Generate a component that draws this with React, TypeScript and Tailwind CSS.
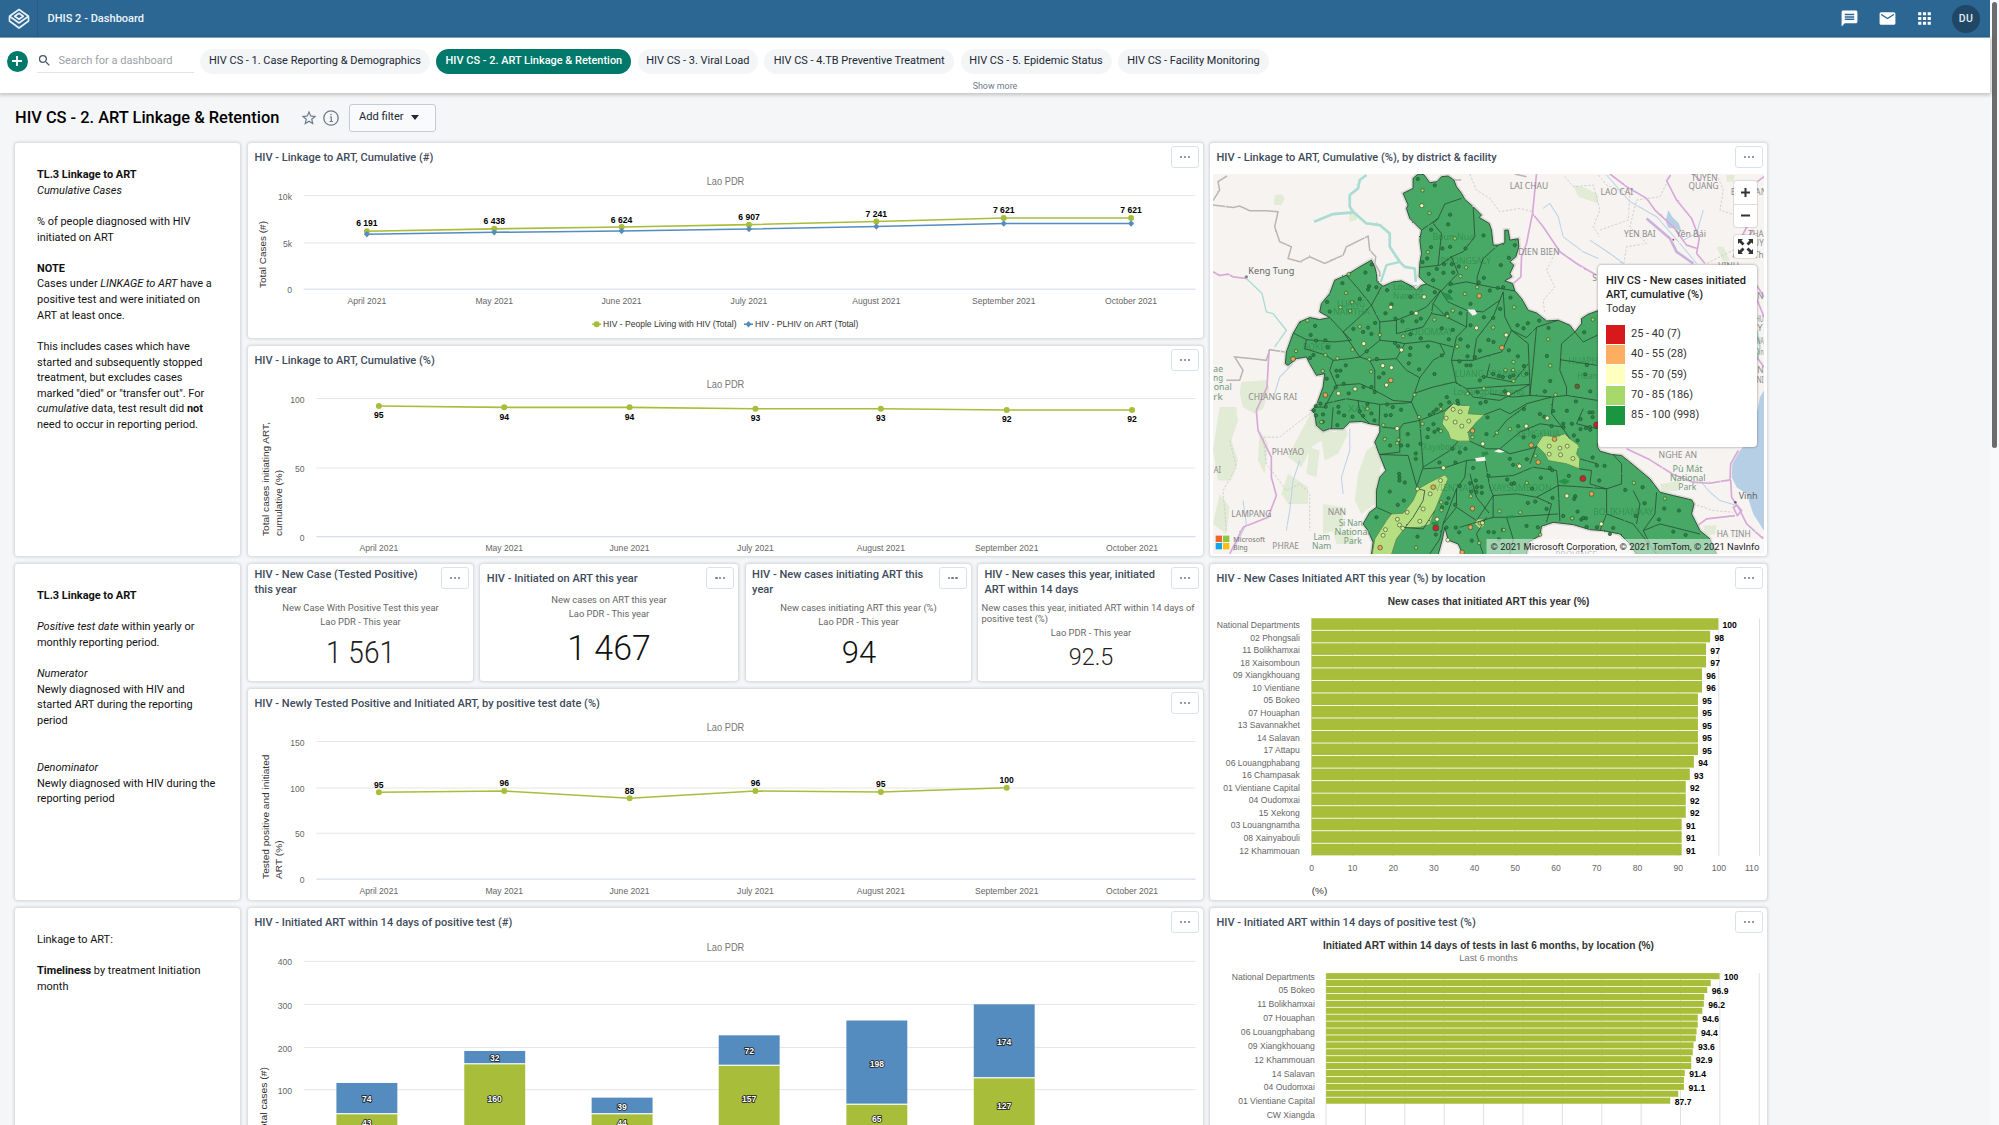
import React from "react";
import { MdMessage, MdMail, MdApps, MdSearch, MdStarBorder } from "react-icons/md";

const GREEN = "#a8be3a";
const BLUE = "#558cc0";
const ARIAL = '"Liberation Sans", Arial, sans-serif';
const ROBOTO = "Roboto, sans-serif";

type TProps = {
  x: number;
  y: number;
  s?: number;
  len?: number;
  anchor?: "start" | "middle" | "end";
  fill?: string;
  weight?: number;
  font?: string;
  rotate?: boolean;
  outline?: boolean;
  children: React.ReactNode;
};

/* Chart label whose y is the vertical middle of its digits. */
function T({ x, y, s = 8.6, len, anchor = "middle", fill = "#666", weight = 400, font = ARIAL, rotate, outline, children }: TProps) {
  const dy = s * 0.355;
  return (
    <text
      x={rotate ? 0 : x}
      y={rotate ? dy : y + dy}
      transform={rotate ? `translate(${x} ${y}) rotate(-90)` : undefined}
      fontSize={s}
      fontFamily={font}
      fontWeight={weight}
      fill={fill}
      textAnchor={anchor}
      textLength={len}
      lengthAdjust="spacingAndGlyphs"
      stroke={outline ? "#1a1a1a" : undefined}
      strokeWidth={outline ? 1.6 : undefined}
      paintOrder={outline ? "stroke" : undefined}
    >
      {children}
    </text>
  );
}

function MenuButton() {
  return (
    <button className="flex h-[22px] w-7 shrink-0 items-center justify-center gap-[1.5px] rounded-[3px] border border-[#d9e2ea] bg-white">
      <i className="size-[2.4px] rounded-full bg-[#6e7a8a]" />
      <i className="size-[2.4px] rounded-full bg-[#6e7a8a]" />
      <i className="size-[2.4px] rounded-full bg-[#6e7a8a]" />
    </button>
  );
}

function Card({ title, twoLine, className, children }: { title?: string; twoLine?: boolean; className: string; children: React.ReactNode }) {
  return (
    <section className={`flex flex-col overflow-hidden rounded-[3px] bg-white shadow-[0_0_3px_1px_rgba(33,43,54,0.17)] ${className}`}>
      {title && (
        <header className="flex h-7 shrink-0 items-start justify-between pt-[3px] pr-[4px] pl-[6.5px]">
          <h2
            className={
              twoLine
                ? "w-[180px] text-[11.05px] leading-[15px] font-medium text-[#404b5a]"
                : "pt-[4px] text-[11.05px] leading-[15px] font-medium whitespace-nowrap text-[#404b5a]"
            }
          >
            {title}
          </h2>
          <MenuButton />
        </header>
      )}
      {children}
    </section>
  );
}

function TextCard({ className, children }: { className: string; children: React.ReactNode }) {
  return (
    <Card className={className}>
      <div className="pt-[24px] pr-3 pl-[22px] text-[10.94px] leading-[15.62px] text-[#111]">{children}</div>
    </Card>
  );
}

const MONTHS = ["April 2021", "May 2021", "June 2021", "July 2021", "August 2021", "September 2021", "October 2021"];
const XA = [367, 494.5, 622, 749.5, 877, 1004.5, 1132];
const XB = [379, 504.5, 630, 756, 881.5, 1007.5, 1133];

function Grid({ rows, x0, lx }: { rows: [string, number][]; x0: number; lx: number }) {
  return (
    <>
      {rows.map(([l, y]) => (
        <g key={l}>
          <line x1={x0} x2={1196.5} y1={y} y2={y} stroke={l === "0" ? "#ccd6eb" : "#e6e6e6"} />
          <T x={lx} y={y + 1} anchor="end">{l}</T>
        </g>
      ))}
    </>
  );
}

function Line({ xs, ys, color = GREEN, diamond }: { xs: number[]; ys: number[]; color?: string; diamond?: boolean }) {
  return (
    <g>
      <polyline points={ys.map((y, i) => `${xs[i]},${y}`).join(" ")} fill="none" stroke={color} strokeWidth="1.6" />
      {ys.map((y, i) =>
        diamond ? (
          <path key={i} d={`M${xs[i]} ${y - 3.2}l3 3.2l-3 3.2l-3-3.2z`} fill={color} />
        ) : (
          <circle key={i} cx={xs[i]} cy={y} r="3" fill={color} />
        )
      )}
    </g>
  );
}

function CumulativeCount() {
  const g = [231.3, 228.8, 227, 224.6, 221.4, 218, 218];
  const b = [234.2, 232.3, 231, 229, 226.4, 223.4, 223.4];
  const v = ["6 191", "6 438", "6 624", "6 907", "7 241", "7 621", "7 621"];
  const ly = [223.3, 221.2, 219.6, 217.3, 214.4, 210.4, 210.4];
  return (
    <svg className="h-[167px] w-full shrink-0" viewBox="248 171 956 167">
      <T x={726} y={181.7} s={10.2} len={37.7} fill="#777">Lao PDR</T>
      <Grid rows={[["10k", 195.5], ["5k", 243], ["0", 289.2]]} x0={303.7} lx={292} />
      <T x={262.5} y={288} s={10} len={67} anchor="start" fill="#333" rotate>Total Cases (#)</T>
      <Line xs={XA} ys={g} />
      <Line xs={XA} ys={b} color={BLUE} diamond />
      {v.map((t, i) => <T key={i} x={XA[i]} y={ly[i]} weight={700} fill="#000">{t}</T>)}
      {MONTHS.map((m, i) => <T key={m} x={XA[i]} y={300.7}>{m}</T>)}
      <Line xs={[597]} ys={[324.3]} />
      <line x1={592.5} x2={601.5} y1={324.3} y2={324.3} stroke={GREEN} strokeWidth="1.6" />
      <T x={603.5} y={324} anchor="start" len={133.5} fill="#333">HIV - People Living with HIV (Total)</T>
      <Line xs={[749]} ys={[324.3]} color={BLUE} diamond />
      <line x1={744.5} x2={753.5} y1={324.3} y2={324.3} stroke={BLUE} strokeWidth="1.6" />
      <T x={755.5} y={324} anchor="start" len={103.5} fill="#333">HIV - PLHIV on ART (Total)</T>
    </svg>
  );
}

function CumulativePct() {
  const y = [406, 407.3, 407.3, 408.7, 408.7, 410, 410];
  const v = [95, 94, 94, 93, 93, 92, 92];
  return (
    <svg className="h-[182px] w-full shrink-0" viewBox="248 374 956 182">
      <T x={726} y={384.7} s={10.2} len={37.7} fill="#777">Lao PDR</T>
      <Grid rows={[["100", 398.5], ["50", 468], ["0", 536.8]]} x0={316.5} lx={304.7} />
      <T x={265} y={536} s={10} len={114} anchor="start" fill="#333" rotate>Total cases initiating ART,</T>
      <T x={278} y={536} s={10} len={66} anchor="start" fill="#333" rotate>cumulative (%)</T>
      <Line xs={XB} ys={y} />
      {v.map((t, i) => <T key={i} x={XB[i]} y={y[i] + 9.4} weight={700} fill="#000">{t}</T>)}
      {MONTHS.map((m, i) => <T key={m} x={XB[i]} y={548.3}>{m}</T>)}
    </svg>
  );
}

function NewlyTested() {
  const y = [793.3, 792, 799.3, 792, 793, 788.7];
  const v = [95, 96, 88, 96, 95, 100];
  return (
    <svg className="h-[182px] w-full shrink-0" viewBox="248 718 956 182">
      <T x={726} y={728.3} s={10.2} len={37.7} fill="#777">Lao PDR</T>
      <Grid rows={[["150", 742.5], ["100", 789], ["50", 834.3], ["0", 880.2]]} x0={316.5} lx={304.7} />
      <T x={265} y={880} s={10} len={124.5} anchor="start" fill="#333" rotate>Tested positive and initiated</T>
      <T x={278} y={880} s={10} len={38.5} anchor="start" fill="#333" rotate>ART (%)</T>
      <Line xs={XB} ys={y} />
      {v.map((t, i) => <T key={i} x={XB[i]} y={y[i] - 7.6} weight={700} fill="#000">{t}</T>)}
      {MONTHS.map((m, i) => <T key={m} x={XB[i]} y={892}>{m}</T>)}
    </svg>
  );
}

function StackedColumns() {
  const c = [367, 495, 622.5, 749.7, 877.5, 1005];
  const top = [1083, 1051, 1097.7, 1035.3, 1020.5, 1004.3];
  const mid = [1114, 1064, 1114, 1065.5, 1104.5, 1078];
  const a = [[74, 1099.3], [32, 1058.2], [39, 1106.8], [72, 1051.2], [198, 1063.8], [174, 1041.8]];
  const b = [[43, 1123], [160, 1098.8], [44, 1123], [157, 1099.3], [65, 1119.2], [127, 1106]];
  return (
    <svg className="h-[207px] w-full shrink-0" viewBox="248 936 956 207">
      <T x={726} y={947} s={10.2} len={37.7} fill="#777">Lao PDR</T>
      <Grid rows={[["400", 961.3], ["300", 1004.5], ["200", 1047.5], ["100", 1089.7]]} x0={303.7} lx={292} />
      <T x={263} y={1134.5} s={10} len={67.5} anchor="start" fill="#333" rotate>Total cases (#)</T>
      {c.map((x, i) => (
        <g key={x}>
          <rect x={x - 30.5} y={top[i]} width={61} height={mid[i] - top[i] - 0.8} fill={BLUE} />
          <rect x={x - 30.5} y={mid[i] + 0.4} width={61} height={80} fill={GREEN} />
          <T x={x} y={a[i][1]} fill="#fff" weight={700} outline>{a[i][0]}</T>
          <T x={x} y={b[i][1]} fill="#fff" weight={700} outline>{b[i][0]}</T>
        </g>
      ))}
    </svg>
  );
}

const LOCATIONS: [string, number][] = [
  ["National Departments", 100], ["02 Phongsali", 98], ["11 Bolikhamxai", 97], ["18 Xaisomboun", 97], ["09 Xiangkhouang", 96],
  ["10 Vientiane", 96], ["05 Bokeo", 95], ["07 Houaphan", 95], ["13 Savannakhet", 95], ["14 Salavan", 95], ["17 Attapu", 95],
  ["06 Louangphabang", 94], ["16 Champasak", 93], ["01 Vientiane Capital", 92], ["04 Oudomxai", 92], ["15 Xekong", 92],
  ["03 Louangnamtha", 91], ["08 Xainyabouli", 91], ["12 Khammouan", 91],
];

function LocationBars() {
  const pitch = 12.55;
  return (
    <svg className="h-[307px] w-full shrink-0" viewBox="1210 593 558 307">
      <T x={1489} y={601.7} s={10.2} len={202} weight={700} fill="#333">New cases that initiated ART this year (%)</T>
      {[0, 10, 20, 30, 40, 50, 60, 70, 80, 90, 100, 110].map((n) => (
        <g key={n}>
          <line x1={1311.7 + n * 4.08} x2={1311.7 + n * 4.08} y1={619} y2={857.5} stroke="#e0e0e0" />
          <T x={n === 110 ? 1752.8 : 1311.9 + n * 4.08} y={869.3}>{n}</T>
        </g>
      ))}
      {LOCATIONS.map(([l, v], i) => (
        <g key={l}>
          <rect x={1311.7} y={619 + i * pitch} width={v * 4.075} height={pitch - 0.9} fill={GREEN} />
          <T x={1300} y={625.8 + i * pitch} anchor="end">{l}</T>
          <T x={1316 + v * 4.075} y={626.2 + i * pitch} anchor="start" weight={700} fill="#000">{v}</T>
        </g>
      ))}
      <T x={1312} y={891.7} s={9.4} anchor="start" len={15.5} fill="#333">(%)</T>
    </svg>
  );
}

function TimelinessBars() {
  const ends = [1360, 1337, 1328, 1320, 1319, 1315, 1303, 1303, 1300, 1298, 1292, 1290, 1286, 1286, 1269, 1267, 1267, 1252, 1231];
  const labels: [string, string][] = [
    ["National Departments", "100"], ["05 Bokeo", "96.9"], ["11 Bolikhamxai", "96.2"], ["07 Houaphan", "94.6"], ["06 Louangphabang", "94.4"],
    ["09 Xiangkhouang", "93.6"], ["12 Khammouan", "92.9"], ["14 Salavan", "91.4"], ["04 Oudomxai", "91.1"], ["01 Vientiane Capital", "87.7"], ["CW Xiangda", ""],
  ];
  const end = (i: number) => 1200 + ends[i] / 2.6133;
  return (
    <svg className="h-[207px] w-full shrink-0" viewBox="1210 936 558 207">
      <T x={1489} y={945.7} s={10.2} len={331.5} weight={700} fill="#333">Initiated ART within 14 days of tests in last 6 months, by location (%)</T>
      <T x={1489} y={958} s={9.4} len={58.5} fill="#777">Last 6 months</T>
      {[0, 1, 2, 3, 4, 5, 6, 7, 8, 9, 10, 11].map((n) => (
        <line key={n} x1={1326.3 + n * 39.45} x2={1326.3 + n * 39.45} y1={973} y2={1143} stroke="#e0e0e0" />
      ))}
      {ends.map((_, i) => (
        <rect key={i} x={1326.3} y={973 + i * 6.93} width={end(i) - 1326.3} height={6.1} fill={GREEN} />
      ))}
      {labels.map(([l, v], i) => (
        <g key={l}>
          <T x={1315} y={976.4 + i * 13.89} anchor="end">{l}</T>
          {v && <T x={end(i * 2) + 4.5} y={977.3 + i * 13.85} anchor="start" weight={700} fill="#000">{v}</T>}
        </g>
      ))}
    </svg>
  );
}

const OUTLINE =
  "655,132 672,134 690,158 712,155 725,140 745,138 762,150 770,170 785,190 795,208 820,230 845,255 838,262 868,280 875,300 880,345 895,345 915,338 915,300 925,300 930,330 955,326 957,350 948,380 930,395 942,405 930,430 936,440 915,452 938,460 945,482 965,505 985,540 1010,548 1040,572 1075,570 1110,585 1125,605 1145,580 1145,565 1165,552 1192,542 1230,540 1260,700 1192,948 1200,962 1235,972 1265,975 1290,995 1320,1020 1350,1045 1380,1085 1420,1095 1475,1108 1482,1120 1475,1150 1500,1200 1530,1225 1550,1272 1310,1272 1290,1240 1260,1210 1210,1200 1170,1197 1120,1182 1060,1175 1025,1187 1020,1215 985,1235 980,1272 790,1272 775,1240 745,1228 735,1190 728,1225 715,1272 515,1272 520,1235 505,1200 490,1180 510,1145 530,1130 530,1080 540,1040 558,1020 540,975 525,935 540,905 540,885 510,880 485,873 450,875 430,895 390,895 370,902 350,885 345,850 335,840 350,825 370,770 375,730 350,735 330,700 320,680 290,685 265,705 257,700 260,665 280,610 300,575 330,562 360,568 390,562 360,545 365,520 390,490 405,450 440,435 480,410 515,390 525,410 530,430 532,455 550,468 580,455 605,452 640,470 650,480 665,465 680,462 658,440 660,400 665,370 660,330 665,300 630,265 620,235 625,225 610,190 640,175 640,145";

const DISTRICTS = [
  "785,205 735,222 715,265 665,300", "820,230 825,320 790,365 755,380 720,405 660,412", "715,265 700,280 725,310 715,405",
  "895,345 850,385 832,440 832,470", "755,380 775,430 745,460 725,482 680,462", "745,465 800,455 870,470 945,482",
  "440,435 475,475 515,525 545,470", "515,525 480,560 430,605 390,562", "515,525 540,575 540,630 480,680 430,605",
  "430,605 455,630 400,635 320,628 280,608", "320,628 315,655 380,675 400,690 450,685 480,680", "540,575 590,570 640,550 680,530 722,482",
  "590,570 590,610 670,590 695,550 700,520", "722,482 745,515 800,540 850,545 900,510 910,485", "722,482 700,520 740,560 800,590 802,545",
  "540,630 590,635 615,640 690,632 760,650", "615,640 590,685 620,720 660,742 700,690 735,670 720,640", "480,680 510,690 590,685",
  "400,690 390,720 410,765 480,760 525,780 580,810 635,815 660,742", "510,690 525,720 525,780", "410,765 375,830 345,830",
  "400,830 395,895", "375,820 440,805 540,822 620,818 635,815", "540,822 538,885", "475,810 480,850 510,880", "635,815 660,870 735,840 760,820",
  "640,790 700,770 765,755 800,775 990,762", "800,590 770,620 755,690 770,760", "900,510 880,560 830,625 820,690",
  "755,690 820,690 850,680 905,665 935,600 985,640 990,760 990,795", "910,485 915,560 935,600", "935,600 980,622 1012,590 1075,570",
  "1010,590 1000,700 990,795 1060,800 1100,795", "1125,605 1085,640 1080,720 1100,770 1100,795 1192,810", "1125,605 1150,635 1192,615",
  "1080,688 1192,705", "1060,800 1055,850 1090,895 1110,925", "853,853 900,835 930,850 980,820 1055,800", "880,920 920,870 980,825",
  "810,932 860,955 900,955 960,905 1020,880 1090,890", "660,870 670,1010 650,1070", "548,890 600,895 600,965 540,972 625,975 650,1065",
  "670,1010 750,960 775,932", "660,870 610,880 600,895", "530,1130 575,1150", "610,1190 670,1195 705,1140", "770,1075 730,1180 720,1225 690,1270",
  "670,1015 740,1010 800,990 855,985", "800,990 795,1040 770,1075 770,1130 730,1180", "855,985 870,1070 880,1095 880,1160 780,1190",
  "880,1095 950,1090 1010,1100 1075,1065 1070,1020 1000,1010 940,1035 870,1040", "1075,1065 1080,1172", "880,1160 920,1160 1075,1150",
  "1138,1015 1175,1020 1170,1060 1220,1075 1220,1150 1200,1200", "1075,1065 1130,1068 1220,1075 1265,1060 1265,1000 1240,972",
  "1370,1085 1365,1150 1330,1200 1350,1240", "1330,1200 1380,1180 1440,1195 1500,1210", "1220,1150 1300,1180 1370,1270", "920,1160 940,1225 930,1270",
  "860,1160 830,1210 850,1270", "770,1130 830,1170 880,1095", "810,1030 830,1100 870,1150", "900,955 930,970 1010,950", "1010,945 990,1000",
  "800,775 820,800 900,810 990,762", "695,550 750,560", "870,700 860,740 940,755 985,700", "1300,1080 1320,1120 1310,1180", "990,795 940,800 870,790",
  "1140,985 1192,1000", "1150,835 1130,880 1192,895", "1040,1175 1055,1120 1010,1100",
];

const DARK =
  "654,147 705,166 751,254 745,283 694,299 851,316 797,355 751,350 728,355 694,351 682,385 668,396 945,345 927,383 903,405 733,402 756,402 777,409 711,416 687,431 731,428 760,427 852,443 700,450 753,461 837,457 910,471 894,473 870,481 705,486 751,484 516,403 497,427 428,459 508,468 505,478 530,471 562,480 632,500 480,506 382,515 390,544 575,522 557,549 587,565 608,573 650,573 663,565 635,548 812,521 782,549 741,550 852,561 880,563 901,536 932,502 346,587 333,614 377,630 349,631 461,596 505,592 526,578 515,611 490,605 726,594 759,599 812,585 747,627 663,624 632,612 586,638 632,653 684,648 595,648 804,648 866,629 881,635 927,660 840,661 953,585 971,594 984,579 1018,571 1046,593 954,678 1041,677 1153,606 501,663 531,686 630,674 627,699 726,675 779,693 803,678 825,680 782,627 341,674 384,650 331,683 438,705 410,721 422,721 413,737 381,745 551,729 538,741 658,717 704,731 515,770 525,785 491,770 432,760 408,771 447,789 800,705 812,705 840,750 852,740 897,737 909,740 930,740 941,735 972,707 980,730 1051,752 1035,783 880,731 915,783 833,785 1161,704 1156,732 1171,783 362,820 378,829 348,827 342,840 349,855 370,852 416,829 417,846 433,855 369,874 458,859 413,884 480,843 515,849 490,856 503,821 524,870 562,822 579,830 573,854 558,855 604,838 710,837 723,823 690,853 701,845 741,800 748,816 775,820 773,811 842,818 858,814 863,861 972,836 1020,851 1033,859 1060,842 1101,841 1128,813 1169,846 1178,860 1142,866 1090,880 1116,880 1055,887 1091,891 1142,896 1158,893 1171,898 701,881 704,904 715,897 683,920 685,896 624,911 955,887 860,911 971,921 1002,919 1122,915 1133,930 624,945 604,945 571,945 662,940 648,969 648,985 758,955 797,955 780,966 767,996 719,996 820,1012 1178,981 1191,1005 1107,1036 940,1003 930,985 981,986 1057,1019 1050,1012 598,1030 599,1040 599,1050 615,1056 570,1083 612,1110 594,1123 828,1050 811,1058 831,1070 845,1069 779,1067 814,1083 829,1085 846,1087 866,1036 922,1047 935,1060 943,1058 1023,1042 1058,1102 1040,1135 997,1074 1006,1113 984,1117 1126,1097 1123,1105 1133,1143 1158,1163 1144,1167 1117,1163 1090,1156 1160,1189 746,1103 740,1118 766,1123 727,1130 530,1160 653,1218 708,1212 740,1191 768,1191 778,1205 816,1230 866,1204 882,1205 909,1198 980,1186 1014,1190 897,1226 1214,1006 1198,1050 1276,1078 1334,1118 1307,1156 1230,1210 1328,1070 1393,1134 1437,1140 1377,1167 1420,1203 1457,1213 1150,1162 1191,1190 1240,1192 1170,890 1207,860 1178,846";
const LIME =
  "668,181 689,249 765,325 684,366 799,412 782,438 832,471 795,491 447,432 439,488 457,516 422,531 451,542 323,571 480,589 540,614 610,618 704,568 759,541 743,558 458,658 377,674 289,662 413,684 509,687 514,724 369,722 880,592 772,649 943,531 1045,627 941,695 917,719 940,719 941,752 1051,706 1067,793 1179,568 503,835 365,875 644,793 658,860 723,836 803,790 852,774 668,880 723,902 818,920 930,896 891,907 555,926 592,938 596,928 551,884 1007,976 981,1057 955,1003 813,1097 724,1115 899,1142 961,1145 1021,1212 912,1198 840,1178 725,1139 649,1251 838,1237 1302,1057 1395,1104 1117,1163";
const PALE =
  "666,227 673,500 573,531 649,549 492,640 605,659 575,712 549,706 560,764 466,776 416,789 592,894 830,593 919,614 926,790 1042,863 979,887 849,940 731,1012 959,1007 1101,1096 712,1166 744,1228 1204,1180";
const OPEN_DOTS = "760,837 781,844 807,872 786,887 766,875 739,863 1048,947 1080,953 1048,971 1082,973 1102,947 1119,984 691,1090 670,1135 660,1172 622,1145 593,1166 599,1183 557,1197 550,1214 609,1193 653,1075 722,1050 848,1177";
const ORANGE = "838,497 906,652 280,686 573,750 377,794 818,901 994,944 1064,926 1015,995 1175,1090 818,1134 812,1190 700,1070 541,1251 787,1265";
const RED = "1149,1044 708,1192 1190,884";

function Dots({ pts, r, fill }: { pts: string; r: number; fill: string }) {
  return (
    <g fill={fill} stroke="#2c4a33" strokeWidth="1.8">
      {pts.split(" ").map((p, i) => {
        const [x, y] = p.split(",");
        return <circle key={i} cx={x} cy={y} r={r} />;
      })}
    </g>
  );
}

function M({ x, y, len, s = 25, fill = "#8b8b8b", children }: { x: number; y: number; len: number; s?: number; fill?: string; children: string }) {
  return (
    <text x={x} y={y + s * 0.36} fontSize={s} fontFamily='"Noto Sans", sans-serif' fill={fill} textLength={len} lengthAdjust="spacingAndGlyphs">
      {children}
    </text>
  );
}

const PINK = [
  "1010,132 1003,200 998,250 980,340 965,380 963,440 940,460", "998,250 1030,290 1060,335 1080,365 1130,400 1190,435", "40,425 60,436 85,432 100,440 140,445",
  "208,660 202,770 170,840 175,900 215,980 215,1040 230,1095 205,1160 130,1190 90,1270", "1230,132 1280,170 1340,205 1365,240 1420,290 1460,345 1492,355",
  "1412,135 1400,152 1430,210 1475,265 1498,325 1490,370 1515,400", "1672,155 1692,140", "1640,290 1620,330 1600,380 1660,300", "1280,955 1350,988 1420,1032 1480,1055 1530,1058 1590,1048 1592,1000 1615,960",
  "1592,1048 1595,1100 1615,1130 1640,1180 1690,1225", "1612,1125 1625,1140 1612,1155 1600,1130 1612,1125", "1605,1155 1520,1165 1480,1195", "1670,465 1692,500", "1668,500 1692,560", "1670,680 1692,710", "1480,132 1500,150",
];

function MapView() {
  return (
    <div className="relative mt-[3px] ml-[3px] h-[380px] w-[551px] shrink-0 overflow-hidden">
      <svg className="block size-full" viewBox="40 132 1652 1138" preserveAspectRatio="none">
        <defs>
          <filter id="jag" x="-5%" y="-5%" width="110%" height="110%">
            <feTurbulence type="fractalNoise" baseFrequency="0.12" numOctaves="2" seed="4" />
            <feDisplacementMap in="SourceGraphic" scale="5" xChannelSelector="R" yChannelSelector="G" />
          </filter>
        </defs>
        <rect x="40" y="132" width="1652" height="1138" fill="#f6f3f0" />
        <g fill="#e2ebd5" filter="url(#jag)">
          <path d="M225 195l20-2l10 12l-10 20l-22 0zM450 250l25 0l-5 20l-22 5zM125 755l75-5l10 25l-20 60l-25 15l-35-20l-10-40zM60 830l50 0l5 40l-20 60l20 60l-20 60l-40 0l-15-90zM180 900l25 40l-10 90l-20-40zM265 1030l60 40l0 50l-60 0l-20-30zM335 845l40 50l30 10l30-15l10 20l-30 60l-40 20l-10-60l-30 20l-30 60l-40-30l30-60zM60 1090l30 40l-10 80l-40-30zM500 960l30-20l15 60l-10 60l-10 60l-40 30l-20-40l10-80zM370 1120l60 10l0 60l-60 20zM1120 165l40 10l35 20l0 25l-60-20zM1580 135l25 0l-5 20l-20 0zM1550 350l20 0l20 40l-20 5zM1380 1060l60-10l-5 30l-50 5zM1510 1185l40 0l-5 25l-30 5zM330 950l30 10l-10 80l-30-10zM400 1200l60 0l0 40l-50 0z" />
        </g>
        <path d="M1692 780l-12 20l-10 50l-5 60l-45 50l-23 40l-2 40l15 30l30 20l20 60l32 50z" fill="#b7cfe5" />
        <path d="M1405 240l12 20l20 20l8 25l-20-10l-20 -2l-8-20z" fill="#b7cfe5" />
        <g fill="none" stroke="#c9c9c9" strokeWidth="2.5" strokeDasharray="7 5" filter="url(#jag)">
          <polyline points="810,132 830,180 870,205 900,245 960,235 1000,245" />
          <polyline points="1070,360 1040,420 1065,470 1030,510 1035,550" />
          <polyline points="1095,140 1120,170 1180,165 1200,240 1180,290 1200,320" />
          <polyline points="1195,135 1220,165 1290,190 1285,270 1200,300" />
          <polyline points="1410,140 1380,200 1310,210 1290,290 1340,340 1280,350 1270,410" />
          <polyline points="1550,132 1570,180 1560,240 1650,270 1620,350 1520,400" />
          <polyline points="350,835 290,880 240,920 190,920 200,1000 260,1080 300,1060 330,1090 330,1200" />
          <polyline points="90,930 110,1010 70,1080 80,1200" />
          <polyline points="1480,1120 1540,1140 1600,1145" />
        </g>
        <g fill="none" stroke="#b9d2e8" strokeWidth="3" filter="url(#jag)">
          <polyline points="1030,235 1050,220 1075,260 1090,320 1150,365 1195,385" />
          <polyline points="1220,135 1290,215 1370,260 1440,340 1490,400" />
          <polyline points="1170,330 1230,370 1270,400" />
          <polyline points="1510,240 1490,310 1450,330" />
          <polyline points="280,700 240,740 225,790" />
          <polyline points="450,895 450,960 425,1040 430,1090" />
          <polyline points="300,990 280,1050 270,1140 260,1200" />
          <polyline points="130,1110 140,1180 100,1260" />
          <polyline points="1500,1050 1530,1085 1560,1110 1610,1125" />
        </g>
        <g fill="none" stroke="#b9b6b4" strokeWidth="4.5" filter="url(#jag)">
          <polyline points="40,225 100,232 120,228 150,242 200,242 235,245 225,290 240,335 275,350 265,385 300,395 330,380 375,400 430,375 440,350 505,318 510,360 528,380 525,400 540,425 540,440" />
          <polyline points="82,138 55,155 60,180 40,212" />
          <polyline points="80,750 120,750 130,720 105,680 160,685 200,690 210,658 255,665" />
          <polyline points="945,132 980,140" />
          <polyline points="750,150 785,150" />
        </g>
        <g fill="none" stroke="#a9dcd2" strokeLinejoin="round" filter="url(#jag)">
          <polyline strokeWidth="8" points="500,135 480,150 475,175 450,195 450,230 460,245 500,280 540,285 570,310 570,350 600,395 615,410 645,415 648,455" />
          <polyline strokeWidth="8" points="343,275 400,252 460,247" />
          <polyline strokeWidth="7" points="600,395 560,405 543,455" />
          <polyline strokeWidth="4" points="140,445 187,490 200,545 220,550 260,600 225,650" />
          <polyline strokeWidth="5" points="1670,600 1680,650 1672,690" />
        </g>
        <g fill="none" stroke="#d8a9d8" strokeWidth="5" strokeLinejoin="round" filter="url(#jag)">
          {PINK.map((p) => <polyline key={p} points={p} />)}
          <polyline points="1340,265 1410,325 1430,365 1480,400" stroke="#c9b3dd" strokeWidth="8" />
        </g>
        <circle cx="140" cy="440" r="5" fill="#888" />
        <circle cx="1420" cy="329" r="4" fill="#e33" stroke="#fff" strokeWidth="2" />
        <circle cx="1606" cy="1115" r="4" fill="#666" />

        <g filter="url(#jag)">
          <polygon points={OUTLINE} fill="none" stroke="#cfcac7" strokeWidth="12" opacity="0.6" />
          <polygon points={OUTLINE} fill="#46a965" stroke="#2b4a34" strokeWidth="2.8" />
          <g fill="#b6df82" stroke="#5b8a4c" strokeWidth="2.5">
            <polygon points="760,820 785,825 812,825 805,850 853,853 830,875 805,905 810,932 775,932 752,925 745,905 727,880 735,845" />
            <polygon points="1030,915 1070,918 1095,910 1110,925 1137,945 1130,970 1140,985 1138,1015 1100,1000 1045,990 1035,970 1010,945" />
            <polygon points="735,1033 745,1045 725,1090 705,1140 690,1182 660,1190 615,1192 590,1225 575,1272 517,1272 525,1225 560,1170 575,1150 610,1148 640,1110 655,1075 690,1055" />
            <polygon points="828,1165 850,1165 855,1185 840,1195 825,1180" />
          </g>
          <g fill="none" stroke="#2b4a34" strokeWidth="2.4" strokeLinejoin="round">
            {DISTRICTS.map((p) => <polyline key={p} points={p} />)}
            <polyline points="655,1075 675,1080 670,1110 640,1160 615,1192" />
          </g>
          <path d="M802 538l22 0l8 12l-12 8zM882 962l15-6l18 8l-15 3zM825 983l30-4l3 12l-28 2z" fill="#f6f3f0" />
          <path d="M725 485l25 8l12 18l-20-5zM845 965l18-2l4 10l-20 4zM1075 1052l20-8l15 8l-15 10zM918 1157l22-4l5 8l-22 3zM695 1174l20 0l3 8l-20 2z" fill="#259246" />
        </g>

        <g opacity="0.32">
          <M x={698} y={322} len={125} fill="#176033">Boun Nua</M>
          <M x={723} y={392} len={150} fill="#176033">PHONGSALY</M>
          <M x={412} y={520} len={84} fill="#176033">LUANG</M>
          <M x={400} y={546} len={110} fill="#176033">NAMTHA</M>
          <M x={580} y={471} len={90} fill="#176033">Louang</M>
          <M x={580} y={496} len={95} fill="#176033">Namtha</M>
          <M x={615} y={605} len={145} fill="#176033">OUDOMXAY</M>
          <M x={310} y={650} len={85} fill="#176033">BOKEO</M>
          <M x={765} y={732} len={215} fill="#176033">LUANG PRABANG</M>
          <M x={760} y={783} len={213} s={28} fill="#176033">Louangphrabang</M>
          <M x={1105} y={693} len={90} fill="#176033">HUAPH</M>
          <M x={1132} y={736} len={60} s={28} fill="#176033">Huan</M>
          <M x={445} y={837} len={60} fill="#176033">XAY</M>
          <M x={670} y={948} len={115} s={28} fill="#176033">Xayaboury</M>
          <M x={950} y={912} len={130} fill="#176033">XIENGKHUA</M>
          <M x={705} y={1071} len={135} fill="#176033">VIENTIANE</M>
          <M x={875} y={1071} len={180} fill="#176033">XAYSOMBOON</M>
          <M x={1180} y={1145} len={180} fill="#176033">BOLIKHAMXAY</M>
        </g>

        <Dots pts={DARK} r={5} fill="#1f8a44" />
        <Dots pts={LIME} r={5.2} fill="#a0d468" />
        <Dots pts={PALE} r={6.2} fill="#f3f3b0" />
        <Dots pts={OPEN_DOTS} r={6} fill="#d8eb94" />
        <Dots pts={ORANGE} r={7} fill="#eea352" />
        <circle cx="1132" cy="768" r="7" fill="#7a5a2a" stroke="#2c4a33" strokeWidth="2" />
        <Dots pts={RED} r={9} fill="#c5272b" />

        <M x={146} y={420} len={138} s={28} fill="#666">Keng Tung</M>
        <M x={930} y={169} len={115}>LAI CHAU</M>
        <M x={955} y={366} len={124}>DIEN BIEN</M>
        <M x={1177} y={444} len={14}>S</M>
        <M x={1202} y={185} len={98}>LAO CAI</M>
        <M x={1474} y={143} len={79}>TUYEN</M>
        <M x={1466} y={169} len={90}>QUANG</M>
        <M x={1272} y={312} len={95}>YEN BAI</M>
        <M x={1428} y={311} len={90} s={27}>Yên Bái</M>
        <M x={1555} y={408} len={62}>VINH</M>
        <M x={1592} y={185} len={110}>BAC KAN</M>
        <M x={1645} y={312} len={46}>THA</M>
        <M x={1660} y={339} len={31}>UY</M>
        <M x={1662} y={375} len={29}>Th</M>
        <M x={1672} y={498} len={19}>N</M>
        <M x={1668} y={565} len={23}>HU</M>
        <M x={1672} y={592} len={16}>Y</M>
        <M x={1670} y={632} len={21}>NA</M>
        <M x={1666} y={666} len={25}>Din</M>
        <M x={1672} y={720} len={19}>N</M>
        <M x={1670} y={748} len={21}>NI</M>
        <M x={1376} y={975} len={115}>NGHE AN</M>
        <M x={1418} y={1015} len={90} fill="#6f9a7b">Pù Mát</M>
        <M x={1410} y={1042} len={107} fill="#6f9a7b">National</M>
        <M x={1435} y={1070} len={54} fill="#6f9a7b">Park</M>
        <M x={1616} y={1094} len={57} s={28} fill="#666">Vinh</M>
        <M x={1550} y={1209} len={102}>HA TINH</M>
        <M x={41} y={717} len={29} fill="#6f9a7b">ae</M>
        <M x={41} y={743} len={29} fill="#6f9a7b">ng</M>
        <M x={42} y={771} len={54} fill="#6f9a7b">onal</M>
        <M x={41} y={801} len={28} fill="#6f9a7b">rk</M>
        <M x={146} y={800} len={146}>CHIANG RAI</M>
        <M x={216} y={965} len={97}>PHAYAO</M>
        <M x={42} y={1018} len={22}>AI</M>
        <M x={95} y={1151} len={120}>LAMPANG</M>
        <M x={384} y={1145} len={55}>NAN</M>
        <M x={218} y={1246} len={80}>PHRAE</M>
        <M x={417} y={1176} len={72} fill="#6f9a7b">Si Nan</M>
        <M x={404} y={1203} len={106} fill="#6f9a7b">National</M>
        <M x={432} y={1232} len={54} fill="#6f9a7b">Park</M>
        <M x={341} y={1220} len={50} fill="#6f9a7b">Lam</M>
        <M x={337} y={1246} len={58} fill="#6f9a7b">Nam</M>
        <M x={1066} y={1274} len={125}>PROVINCE</M>

        <rect x="48" y="1215" width="19" height="19" fill="#f2642b" />
        <rect x="70" y="1215" width="19" height="19" fill="#8dc63f" />
        <rect x="48" y="1237" width="19" height="19" fill="#12a8ec" />
        <rect x="70" y="1237" width="19" height="19" fill="#fdbf12" />
        <M x={101} y={1225} len={95} s={23} fill="#777">Microsoft</M>
        <M x={101} y={1249} len={43} s={23} fill="#777">Bing</M>

        <rect x="860" y="1225" width="832" height="45" fill="#fff" opacity="0.5" />
        <T x={872} y={1248} s={27} len={807} anchor="start" fill="#222" font={ROBOTO}>© 2021 Microsoft Corporation, © 2021 TomTom, © 2021 NavInfo</T>
      </svg>

      <div className="absolute top-[7px] right-[7.500px] flex flex-col items-end">
        <div className="flex h-[46px] w-[23px] flex-col divide-y divide-[#ddd] rounded-[3px] bg-white shadow-[0_0_0_1px_rgba(0,0,0,0.1)]">
          <span className="flex flex-1 items-center justify-center">
            <svg className="size-[9px]" viewBox="0 0 9 9"><path d="M4.5 0v9M0 4.5h9" stroke="#333" strokeWidth="2" /></svg>
          </span>
          <span className="flex flex-1 items-center justify-center">
            <svg className="size-[9px]" viewBox="0 0 9 9"><path d="M0 4.5h9" stroke="#333" strokeWidth="2" /></svg>
          </span>
        </div>
        <div className="mt-2 flex h-[23px] w-[23px] items-center justify-center rounded-[3px] bg-white shadow-[0_0_0_1px_rgba(0,0,0,0.1)]">
          <svg className="size-[15px]" viewBox="0 0 15 15">
            <path d="M0 0h5L3.5 1.5l3 3l-2 2l-3-3L0 5zM15 0v5l-1.500-1.500l-3 3l-2-2l3-3L10 0zM0 15v-5l1.500 1.500l3-3l2 2l-3 3L5 15zM15 15h-5l1.500-1.500l-3-3l2-2l3 3L15 10z" fill="#333" />
          </svg>
        </div>
        <div className="mt-[7px] h-[182px] w-[159px] rounded-[4px] bg-white pt-[9px] pl-[8.500px] text-[#333] shadow-[0_0_2px_1px_rgba(0,0,0,0.2)]">
          <p className="text-[11px] leading-[14.2px] font-medium whitespace-nowrap text-[#222]">HIV CS - New cases initiated<br />ART, cumulative (%)</p>
          <p className="mb-[8px] text-[11px] leading-[14.2px]">Today</p>
          {LEGEND.map(([c, l]) => (
            <div key={l} className="mb-[1.400px] flex h-[19px] items-center gap-[6px] text-[11px]">
              <span className={`h-[19px] w-[19px] ${c}`} />
              {l}
            </div>
          ))}
        </div>
      </div>
    </div>
  );
}

const LEGEND: [string, string][] = [
  ["bg-[#d7191c]", "25 - 40 (7)"],
  ["bg-[#fdae61]", "40 - 55 (28)"],
  ["bg-[#ffffbf]", "55 - 70 (59)"],
  ["bg-[#a6d96a]", "70 - 85 (186)"],
  ["bg-[#1a9641]", "85 - 100 (998)"],
];

const CHIPS = [
  ["HIV CS - 1. Case Reporting & Demographics", "w-[230px]"],
  ["HIV CS - 2. ART Linkage & Retention", "w-[195px]"],
  ["HIV CS - 3. Viral Load", "w-[120px]"],
  ["HIV CS - 4.TB Preventive Treatment", "w-[190px]"],
  ["HIV CS - 5. Epidemic Status", "w-[151px]"],
  ["HIV CS - Facility Monitoring", "w-[151px]"],
];

export default function App() {
  return (
    <div className="flex h-[1125px] w-[1999px] overflow-hidden bg-[#f4f6f8] font-[Roboto,sans-serif] text-[#212934]">
      <div className="flex w-[1990px] shrink-0 flex-col">
        <header className="flex h-[38px] shrink-0 items-center border-b border-[#8fb0cb] bg-[#2c6693]">
          <div className="flex h-full w-[38px] items-center justify-center border-r border-[#275b84]">
            <svg className="size-[22px]" viewBox="0 0 22 22" fill="none" stroke="#e8f0f6" strokeWidth="1.700" strokeLinejoin="round">
              <path d="M11 1.500L20.500 8.200L11 15L1.500 8.200z" />
              <path d="M11 5.300L15.300 8.300L11 11.300L6.700 8.300z" />
              <path d="M1.500 9v4L11 20L20.500 13V9" />
            </svg>
          </div>
          <span className="ml-[9.500px] pt-px text-[11.050px] font-medium text-[#eef4f8]">DHIS 2 - Dashboard</span>
          <div className="ml-auto flex items-center pr-[10px] text-white">
            <MdMessage className="mr-[18.500px] size-[19px]" />
            <MdMail className="mr-[18px] size-[19px]" />
            <MdApps className="mr-[18.500px] size-[19px]" />
            <span className="flex size-7 items-center justify-center rounded-full bg-[#204766] text-[10.500px] font-medium tracking-[0.5px] text-[#e3ebf1]">DU</span>
          </div>
        </header>

        <nav className="z-10 flex h-[55px] shrink-0 flex-col bg-white shadow-[0_1px_4px_1px_rgba(0,0,0,0.22)]">
          <div className="flex h-[46px] shrink-0 items-center pl-[6.500px]">
            <span className="flex size-[21px] items-center justify-center rounded-full bg-[#00796b]">
              <svg className="size-[10px]" viewBox="0 0 10 10"><path d="M5 0v10M0 5h10" stroke="#fff" strokeWidth="1.800" /></svg>
            </span>
            <div className="mr-[6.500px] ml-[9.500px] flex h-[23px] w-[156.500px] items-center border-b border-[#e0e4e8]">
              <MdSearch className="size-[15px] text-[#4a5768]" />
              <span className="ml-[6.500px] pt-px text-[11px] text-[#9a9fa6]">Search for a dashboard</span>
            </div>
            <div className="flex gap-[6.400px]">
              {CHIPS.map(([c, w], i) => (
                <span
                  key={c}
                  className={`flex h-[25px] items-center justify-center rounded-full pt-px text-[10.96px] whitespace-nowrap ${w} ${i === 1 ? "bg-[#00796b] font-medium text-white" : "bg-[#f3f5f7] text-[#212934]"}`}
                >
                  {c}
                </span>
              ))}
            </div>
          </div>
          <span className="-mt-[4px] text-center text-[8.900px] leading-[12px] text-[#6e7a8a]">Show more</span>
        </nav>

        <div className="flex h-[49px] shrink-0 items-center pl-[15px]">
          <h1 className="w-[266px] pt-px text-[16.400px] font-medium whitespace-nowrap text-black">HIV CS - 2. ART Linkage &amp; Retention</h1>
          <MdStarBorder className="ml-[19px] size-[18px] text-[#6e7a8a]" />
          <svg className="ml-[5px] size-[16px]" viewBox="0 0 16 16" fill="none" stroke="#6e7a8a">
            <circle cx="8" cy="8" r="7.200" strokeWidth="1.300" />
            <path d="M6.800 7h1.500v4.500M6.500 11.500h3.500" strokeWidth="1.200" />
            <circle cx="8" cy="4.600" r="0.500" fill="#6e7a8a" strokeWidth="0.600" />
          </svg>
          <button className="ml-[10px] flex h-[28px] w-[87px] items-center rounded-[3px] border border-[#c3ccd6] bg-[#f9fafb] pl-[9px] text-[11.100px]">
            Add filter
            <svg className="ml-[7px] h-[5px] w-[8px]" viewBox="0 0 8 5"><path d="M0 0h8L4 5z" fill="#212934" /></svg>
          </button>
        </div>

        <main className="flex shrink-0 pt-px pl-[15px]">
          <div className="mr-[8px] flex w-[225px] shrink-0 flex-col gap-[8px]">
            <TextCard className="h-[413px]">
              <b>TL.3 Linkage to ART</b><br />
              <i>Cumulative Cases</i><br /><br />
              % of people diagnosed with HIV<br />initiated on ART<br /><br />
              <b>NOTE</b><br />
              Cases under <i>LINKAGE to ART</i> have a<br />positive test and were initiated on<br />ART at least once.<br /><br />
              This includes cases which have<br />started and subsequently stopped<br />treatment, but excludes cases<br />marked "died" or "transfer out". For<br />
              <i>cumulative</i> data, test result did <b>not</b><br />need to occur in reporting period.
            </TextCard>
            <TextCard className="h-[336px]">
              <b>TL.3 Linkage to ART</b><br /><br />
              <i>Positive test date</i> within yearly or<br />monthly reporting period.<br /><br />
              <i>Numerator</i><br />Newly diagnosed with HIV and<br />started ART during the reporting<br />period<br /><br /><br />
              <i>Denominator</i><br />Newly diagnosed with HIV during the<br />reporting period
            </TextCard>
            <TextCard className="h-[235px]">
              Linkage to ART:<br /><br />
              <b>Timeliness</b> by treatment Initiation<br />month
            </TextCard>
          </div>

          <div className="mr-[7px] flex w-[955px] shrink-0 flex-col gap-[8px]">
            <Card title="HIV - Linkage to ART, Cumulative (#)" className="h-[195px]"><CumulativeCount /></Card>
            <Card title="HIV - Linkage to ART, Cumulative (%)" className="h-[210px]"><CumulativePct /></Card>
            <div className="flex h-[117px] gap-[7.300px]">
              <Card title="HIV - New Case (Tested Positive) this year" twoLine className="w-[225px] shrink-0">
                <svg className="h-[89px] w-full shrink-0" viewBox="248 593 225 89">
                  <T x={360.500} y={608.700} s={9.800} len={156.500} font={ROBOTO}>New Case With Positive Test this year</T>
                  <T x={360.500} y={623} s={9.800} len={80.500} font={ROBOTO}>Lao PDR - This year</T>
                  <T x={360.500} y={652.500} s={31.500} len={69} font={ROBOTO} weight={300} fill="#212121">1 561</T>
                </svg>
              </Card>
              <Card title="HIV - Initiated on ART this year" className="w-[258px] shrink-0">
                <svg className="h-[89px] w-full shrink-0" viewBox="480 593 258 89">
                  <T x={609} y={601} s={9.800} len={115.500} font={ROBOTO}>New cases on ART this year</T>
                  <T x={609} y={615} s={9.800} len={80.500} font={ROBOTO}>Lao PDR - This year</T>
                  <T x={609} y={649} s={34.700} len={83.500} font={ROBOTO} weight={300} fill="#111">1 467</T>
                </svg>
              </Card>
              <Card title="HIV - New cases initiating ART this year" twoLine className="w-[225px] shrink-0">
                <svg className="h-[89px] w-full shrink-0" viewBox="746 593 225 89">
                  <T x={858.500} y={608.700} s={9.800} len={156.500} font={ROBOTO}>New cases initiating ART this year (%)</T>
                  <T x={858.500} y={623} s={9.800} len={80.500} font={ROBOTO}>Lao PDR - This year</T>
                  <T x={859} y={652.500} s={31} font={ROBOTO} weight={300} fill="#111">94</T>
                </svg>
              </Card>
              <Card title="HIV - New cases this year, initiated ART within 14 days" twoLine className="w-[225px] shrink-0">
                <svg className="h-[89px] w-full shrink-0" viewBox="978 593 225 89">
                  <T x={981.500} y={609} s={9.800} len={213} anchor="start" font={ROBOTO}>New cases this year, initiated ART within 14 days of</T>
                  <T x={981.500} y={620} s={9.800} len={66.500} anchor="start" font={ROBOTO}>positive test (%)</T>
                  <T x={1091} y={633.700} s={9.800} len={80.500} font={ROBOTO}>Lao PDR - This year</T>
                  <T x={1091} y={657.700} s={23.500} len={44.500} font={ROBOTO} weight={300} fill="#212121">92.5</T>
                </svg>
              </Card>
            </div>
            <Card title="HIV - Newly Tested Positive and Initiated ART, by positive test date (%)" className="h-[211px]"><NewlyTested /></Card>
            <Card title="HIV - Initiated ART within 14 days of positive test (#)" className="h-[235px]"><StackedColumns /></Card>
          </div>

          <div className="flex w-[557px] shrink-0 flex-col gap-[8px]">
            <Card title="HIV - Linkage to ART, Cumulative (%), by district & facility" className="h-[413px]"><MapView /></Card>
            <Card title="HIV - New Cases Initiated ART this year (%) by location" className="h-[336px]"><LocationBars /></Card>
            <Card title="HIV - Initiated ART within 14 days of positive test (%)" className="h-[235px]"><TimelinessBars /></Card>
          </div>
        </main>
      </div>
      <div className="flex w-[9px] shrink-0 justify-center bg-[#f8f9fa] pt-[2px]">
        <div className="h-[446px] w-[5px] rounded-full bg-[#6c6c6c]" />
      </div>
    </div>
  );
}
